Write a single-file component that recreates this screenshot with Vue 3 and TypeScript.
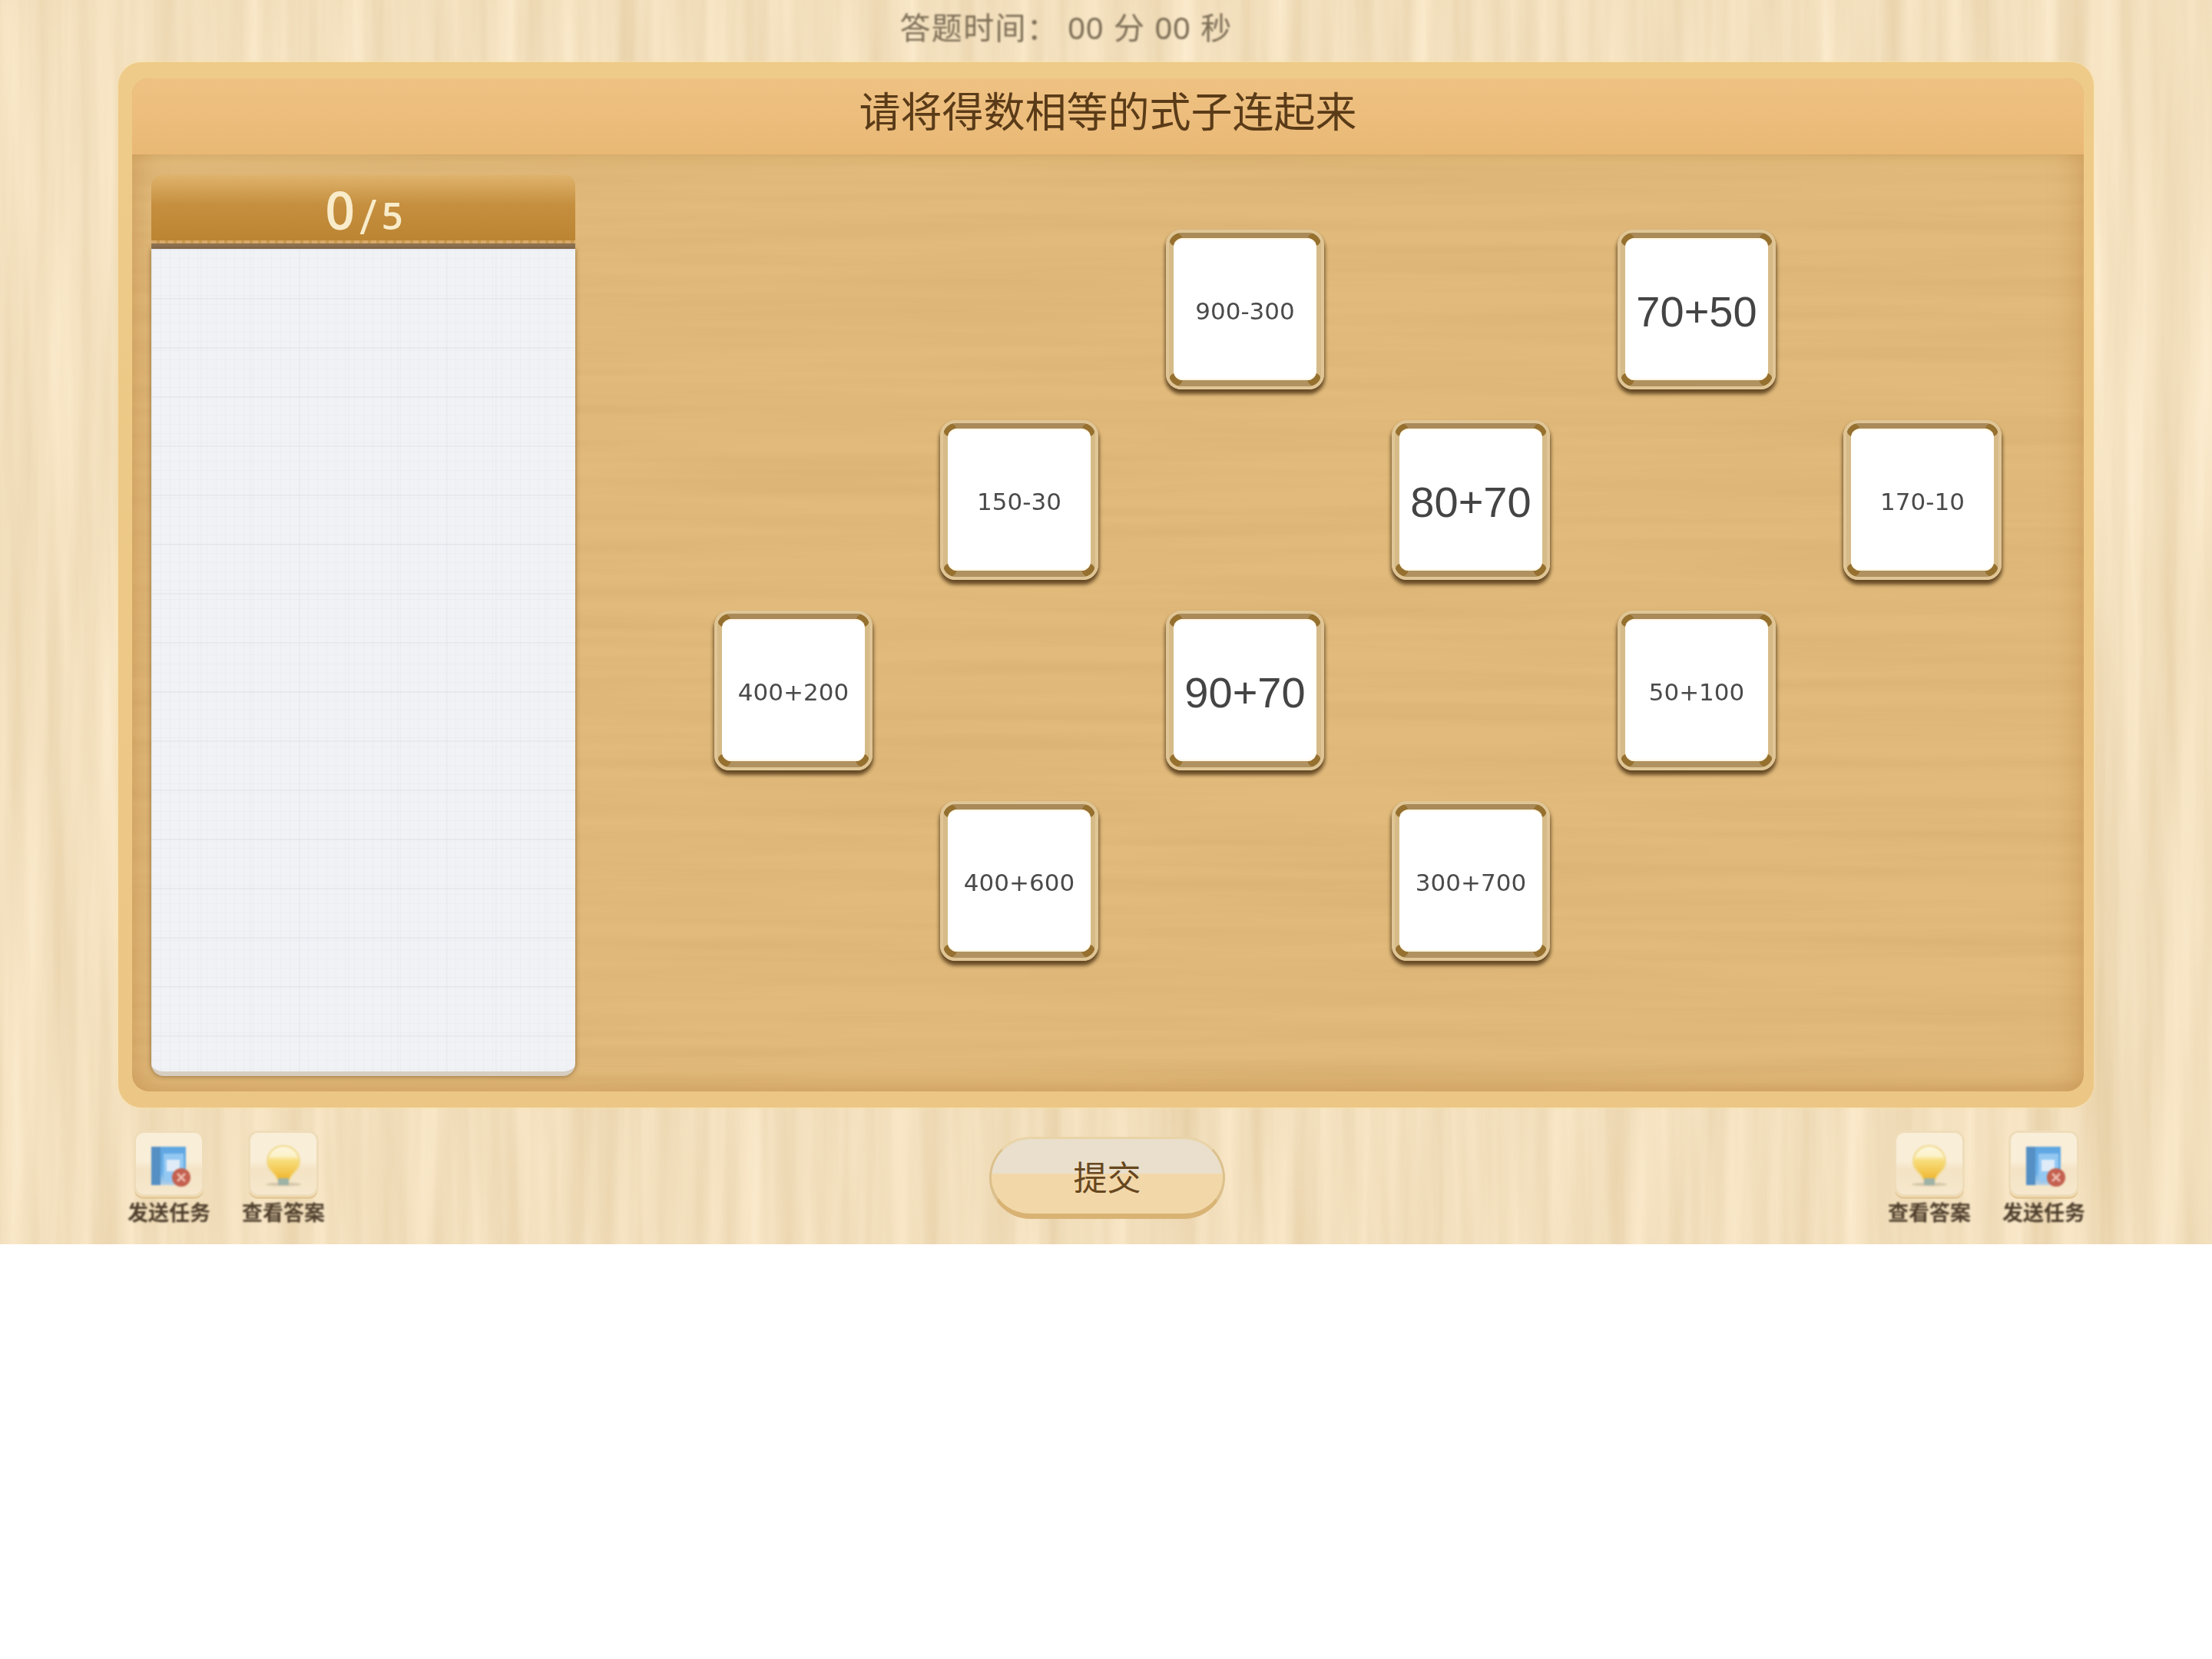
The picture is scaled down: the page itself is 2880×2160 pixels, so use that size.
<script setup lang="ts">
type Card = { label: string; col: number; row: number; big?: boolean };
const cards: Card[] = [
  { label: "900-300", col: 3, row: 1 },
  { label: "70+50", col: 5, row: 1, big: true },
  { label: "150-30", col: 2, row: 2 },
  { label: "80+70", col: 4, row: 2, big: true },
  { label: "170-10", col: 6, row: 2 },
  { label: "400+200", col: 1, row: 3 },
  { label: "90+70", col: 3, row: 3, big: true },
  { label: "50+100", col: 5, row: 3 },
  { label: "400+600", col: 2, row: 4 },
  { label: "300+700", col: 4, row: 4 },
];
const leftTools = ["send", "answer"];
const rightTools = ["answer", "send"];
const toolNames: Record<string, string> = {
  send: "发送任务",
  answer: "查看答案",
};
const toolGroups = [leftTools, rightTools];
</script>

<template>
  <div class="page">
    <svg class="grain" width="2880" height="1620">
      <filter id="woodGrain" x="0" y="0" width="100%" height="100%" color-interpolation-filters="sRGB">
        <feTurbulence type="fractalNoise" baseFrequency="0.025 0.0012" numOctaves="4" seed="7" />
        <feColorMatrix
          values="0.11 0 0 0 0.895
                  0.14 0 0 0 0.805
                  0.2 0 0 0 0.64
                  0 0 0 0 1"
        />
      </filter>
      <rect width="2880" height="1620" filter="url(#woodGrain)" />
    </svg>
    <div class="timer">答题时间： 00 分 00 秒</div>
    <section class="panel">
      <div class="board">
        <svg class="grain board-grain" width="2541" height="1319">
          <filter id="boardGrain" x="0" y="0" width="100%" height="100%" color-interpolation-filters="sRGB">
            <feTurbulence type="fractalNoise" baseFrequency="0.0015 0.05" numOctaves="3" seed="3" />
            <feColorMatrix
              values="0 0 0 0 0.6
                      0 0 0 0 0.42
                      0 0 0 0 0.18
                      0.16 0 0 0 -0.05"
            />
          </filter>
          <rect width="2541" height="1319" filter="url(#boardGrain)" />
        </svg>
        <h1 class="title"><span>请将得数相等的式子连起来</span></h1>
        <div class="content">
          <aside class="score-col">
            <div class="score-head">
              <span class="score-now">0</span><span class="score-sep">/</span><span class="score-total">5</span>
            </div>
            <div class="sheet"></div>
          </aside>
          <div class="cards">
            <div
              v-for="c in cards"
              :key="c.label"
              class="card"
              :style="{ gridColumn: c.col, gridRow: c.row }"
            >
              <div class="card-face" :class="{ big: c.big }">
                <span>{{ c.label }}</span>
              </div>
            </div>
          </div>
        </div>
      </div>
    </section>
    <footer class="bottom">
      <div v-for="(group, i) in toolGroups" :key="i" class="tools">
        <div v-for="t in group" :key="t" class="tool">
          <div class="tool-btn">
            <svg v-if="t === 'send'" width="56" height="62" viewBox="0 0 56 62">
              <defs>
                <linearGradient id="bookFace" x1="0" y1="0" x2="0" y2="1">
                  <stop offset="0" stop-color="#5ea6e2" />
                  <stop offset="0.7" stop-color="#6cb0e8" />
                  <stop offset="1" stop-color="#b6d2e6" />
                </linearGradient>
              </defs>
              <rect x="5" y="9" width="45" height="50" fill="url(#bookFace)" />
              <rect x="5" y="9" width="12" height="50" fill="#558fc4" />
              <rect x="21" y="18" width="26" height="36" fill="#93c8f3" />
              <rect x="25" y="26" width="17" height="15" fill="#dfecf8" />
              <circle cx="44" cy="49" r="12" fill="#c4604f" />
              <path d="M39 44l10 10M49 44L39 54" stroke="#ecbcae" stroke-width="3" />
            </svg>
            <svg v-else width="56" height="62" viewBox="0 0 56 62">
              <defs>
                <linearGradient id="bulbFill" x1="0" y1="0" x2="0" y2="1">
                  <stop offset="0" stop-color="#fdf7e0" />
                  <stop offset="0.3" stop-color="#fcf2c8" />
                  <stop offset="0.42" stop-color="#f8de7e" />
                  <stop offset="1" stop-color="#f0b62e" />
                </linearGradient>
              </defs>
              <ellipse cx="28" cy="58" rx="23" ry="2.5" fill="#d6c8ab" />
              <path
                d="M28 8C16 8 7 17 7 29c0 8 6 12 10 17 2 3 3 5 3 6h16c0-1 1-3 3-6 4-5 10-9 10-17C49 17 40 8 28 8z"
                fill="url(#bulbFill)"
                stroke="#f0d98a"
                stroke-width="2"
              />
              <rect x="21" y="50" width="14" height="9" fill="#9fb2a6" />
            </svg>
          </div>
          <span class="tool-label">{{ toolNames[t] }}</span>
        </div>
      </div>
      <button class="submit">提交</button>
    </footer>
  </div>
</template>

<style scoped>
.page {
  position: relative;
  isolation: isolate;
  width: 2880px;
  height: 1620px;
  overflow: hidden;
  display: flex;
  flex-direction: column;
  font-family: "Liberation Sans", "Noto Sans CJK SC", sans-serif;
  background-color: #f3dfbc;
}
.grain {
  position: absolute;
  left: 0;
  top: 0;
  z-index: -1;
}
.timer {
  height: 81px;
  padding: 13px 104px 0 0;
  box-sizing: border-box;
  text-align: center;
  font-size: 40px;
  line-height: 48px;
  letter-spacing: 1.3px;
  color: #7d6e56;
  filter: blur(0.8px);
}
.panel {
  margin: 0 154px;
  height: 1361px;
  flex: none;
  padding: 21px 13px 21px 18px;
  box-sizing: border-box;
  border-radius: 30px;
  background: linear-gradient(#eecb88, #ecc684);
  box-shadow: 0 0 4px rgba(250, 225, 170, 0.9);
}
.board {
  position: relative;
  isolation: isolate;
  height: 100%;
  border-radius: 22px;
  display: flex;
  flex-direction: column;
  overflow: hidden;
  background: #e2bb7c;
  box-shadow: inset 0 0 40px rgba(180, 122, 52, 0.55);
}
.title {
  position: relative;
  margin: 0;
  height: 99px;
  flex: none;
  text-align: center;
  font-size: 54px;
  font-weight: 400;
  line-height: 90px;
  color: #5a3b18;
  background: linear-gradient(#efc283, #e9b875);
  box-shadow: 0 6px 14px rgba(185, 130, 60, 0.25);
}
.title span {
  display: inline-block;
  filter: blur(0.6px);
}
.content {
  flex: 1;
  display: flex;
  min-height: 0;
}
.score-col {
  width: 552px;
  margin: 27px 0 20px 25px;
  flex: none;
  display: flex;
  flex-direction: column;
}
.score-head {
  height: 96px;
  flex: none;
  box-sizing: border-box;
  padding-left: 2px;
  text-align: center;
  color: #f9eccb;
  font-family: "Open Sans", sans-serif;
  font-weight: 600;
  border-radius: 14px 14px 0 0;
  background:
    repeating-linear-gradient(90deg, #d8aa68 0 7px, #c9994f 7px 11px) left 85px / 100% 4px no-repeat,
    linear-gradient(#8e7354, #8e7354) left bottom / 100% 7px no-repeat,
    linear-gradient(#dfb36c, #c58f3f 40%, #b9822f);
}
.score-now {
  font-size: 68px;
  line-height: 90px;
}
.score-sep {
  margin: 0 6px;
  font-size: 62px;
  font-weight: 400;
  position: relative;
  top: 6px;
}
.score-total {
  font-size: 49px;
}
.sheet {
  flex: 1;
  box-sizing: border-box;
  border-radius: 0 0 16px 16px;
  border-bottom: 6px solid #d6cec0;
  background-color: #f1f2f5;
  background-image:
    linear-gradient(rgba(218, 222, 228, 0.4) 2px, transparent 2px),
    linear-gradient(90deg, rgba(218, 222, 228, 0.2) 2px, transparent 2px),
    linear-gradient(rgba(222, 226, 232, 0.3) 1px, transparent 1px),
    linear-gradient(90deg, rgba(222, 226, 232, 0.3) 1px, transparent 1px);
  background-size: 100% 64px, 64px 100%, 12px 12px, 12px 12px;
  box-shadow: 0 0 6px rgba(90, 60, 20, 0.65);
}
.cards {
  display: grid;
  grid-template-columns: repeat(6, 294px);
  grid-template-rows: repeat(4, 248px);
  justify-items: center;
  align-items: center;
  margin: 78px 0 0 137px;
  align-content: start;
}
.card {
  width: 206px;
  height: 208px;
  box-sizing: border-box;
  padding: 7px 6px 8px;
  border-radius: 20px;
  border: 4px solid #e0c696;
  background:
    radial-gradient(circle at 9px 9px, #96702f 0 8px, transparent 9px) left top / 20px 20px no-repeat,
    radial-gradient(circle at 11px 9px, #96702f 0 8px, transparent 9px) right top / 20px 20px no-repeat,
    radial-gradient(circle at 9px 11px, #96702f 0 8px, transparent 9px) left bottom / 20px 20px no-repeat,
    radial-gradient(circle at 11px 11px, #96702f 0 8px, transparent 9px) right bottom / 20px 20px no-repeat,
    linear-gradient(#a98a58 0 7px, #d6bb88 7px calc(100% - 8px), #b09260 calc(100% - 8px));
  box-shadow: 0 5px 5px 1px rgba(60, 36, 8, 0.75);
}
.card-face {
  width: 100%;
  height: 100%;
  box-sizing: border-box;
  padding-top: 5px;
  display: flex;
  align-items: center;
  justify-content: center;
  background: #fff;
  border-radius: 12px;
  box-shadow: inset 0 2px 1px #fff7e6, inset 0 -2px 1px #fff7e6;
  font-family: "DejaVu Sans", sans-serif;
  font-size: 31px;
  color: #4a4a4a;
}
.card-face span {
  filter: blur(0.7px);
}
.card-face.big {
  font-family: "Liberation Sans", sans-serif;
  font-size: 56px;
  color: #444;
}
.bottom {
  flex: 1;
  display: flex;
  justify-content: space-between;
  padding: 33px 169px 0 170px;
  position: relative;
}
.tools {
  display: flex;
  gap: 49px;
}
.tool {
  width: 100px;
  display: flex;
  flex-direction: column;
  align-items: center;
}
.tool-btn {
  width: 86px;
  height: 80px;
  border-radius: 10px;
  display: flex;
  align-items: center;
  justify-content: center;
  background: linear-gradient(#f9eed8 45%, #f4e3c4 60%, #f6e8cd);
  box-shadow: 0 0 0 3px #efdcb9, 0 4px 0 2px #e5c998;
}
.tool-btn svg {
  filter: blur(0.8px);
}
.tool-label {
  margin-top: 9px;
  white-space: nowrap;
  font-size: 27px;
  line-height: 32px;
  font-weight: 700;
  color: #4f3f2d;
  filter: blur(1px);
}
.submit {
  position: absolute;
  left: 1288px;
  top: 38px;
  width: 307px;
  height: 107px;
  padding: 0 0 2px;
  box-sizing: border-box;
  border: 3px solid #dcc08c;
  border-top-color: #e9d3a8;
  border-bottom: 7px solid #d9b374;
  border-radius: 54px;
  font-family: inherit;
  font-size: 44px;
  color: #67471f;
  background: linear-gradient(#e9dfcc 46%, #f2d8a9 46%);
}
</style>
